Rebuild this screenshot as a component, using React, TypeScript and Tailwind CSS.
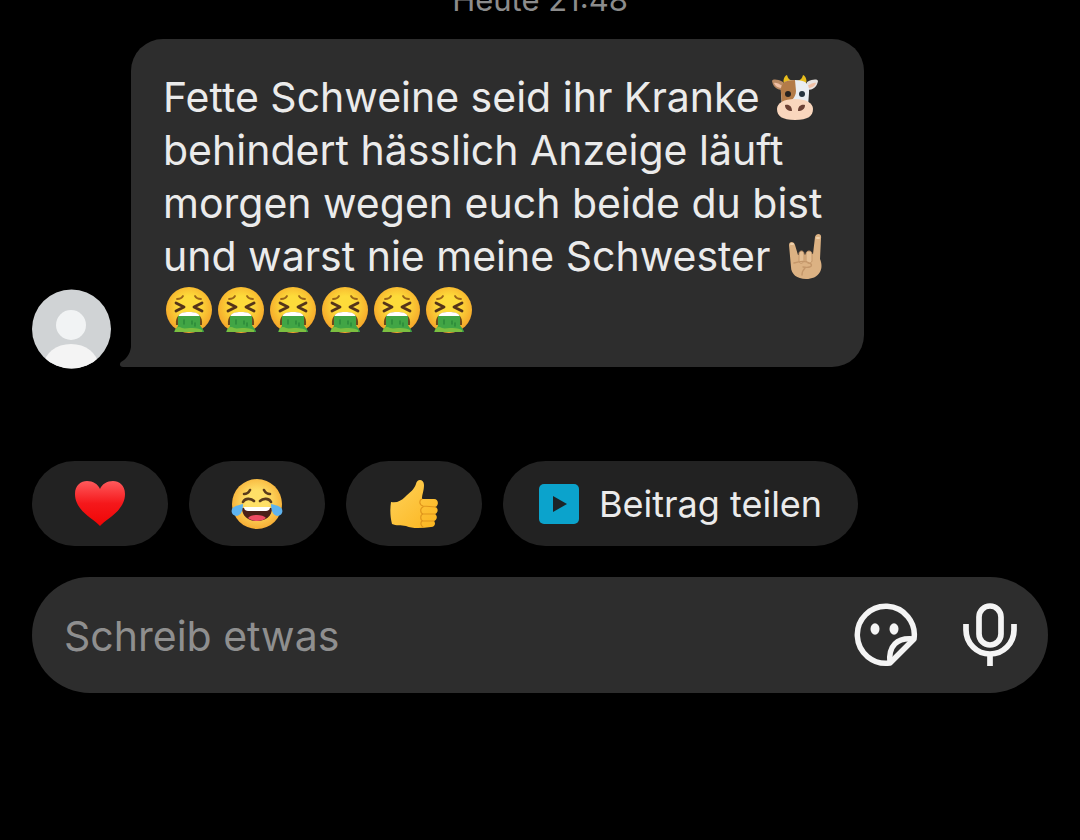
import React from "react";

type IconProps = { className?: string };

function Cow({ className }: IconProps) {
  return (
    <svg viewBox="0 0 48 48" className={className} role="img" aria-label="Kuh">
      <path d="M14 11C11 8 13 2 16 1c1 4 3 5 6 6v4zM34 11c3-3 1-9-2-10-1 4-3 5-6 6v4z" fill="#e8bd1c" />
      <path d="M12 8C6 5 2 5 1 7c1 6 5 9 11 9z" fill="#b98a63" />
      <path d="M12 12C7 9 4 8 3 9c1 3 4 5 9 5z" fill="#f0bfa4" />
      <path d="M36 8c6-3 10-3 11-1-1 6-5 9-11 9z" fill="#e8e3e0" />
      <path d="M36 12c5-3 8-4 9-3-1 3-4 5-9 5z" fill="#f0bfa4" />
      <path d="M24 6C14 6 9 9 10 19l1 13h26l1-13c1-10-4-13-14-13z" fill="#e9edf2" />
      <path d="M24 6C13 6 9 9 10 19l1 12c8-2 14-7 14-14z" fill="#b37b48" />
      <path d="M24 25c-11 0-18 4-18 10 0 7 5 11 18 11s18-4 18-11c0-6-7-10-18-10z" fill="#f9d6bd" />
      <circle cx="17" cy="20" r="3" fill="#25211f" />
      <circle cx="31" cy="20" r="3" fill="#25333f" />
      <path d="M14 31c4-1 7 1 7 6-4 0-7-2-7-6zM34 31c-4-1-7 1-7 6 4 0 7-2 7-6z" fill="#6b4034" />
    </svg>
  );
}

function Horns({ className }: IconProps) {
  return (
    <svg viewBox="0 0 48 48" className={className} role="img" aria-label="Rock-Geste">
      <path
        d="M7 12c0-4 5-4 6 0l3 10 15-1 2-17c1-4 7-4 6 1l-1 21c2 5 2 9 0 13-3 5-8 7-14 7-9 0-15-5-15-12z"
        fill="#dcb283"
      />
      <path d="M17 21c0-4 5-4 5 0v7c-1 3-5 3-5 0zM24 21c0-4 6-4 6 0v7c-1 3-5 3-6 0z" fill="#e5bf93" stroke="#c4976a" strokeWidth="1" />
      <path d="M12 30c6-2 12-3 17 1 2 3-3 4-8 3M23 35c-2 2-3 4-3 7" fill="none" stroke="#c4976a" strokeWidth="1.4" strokeLinecap="round" />
      <path d="M9 11h2M35 5h2" stroke="#f0d2ad" strokeWidth="2" strokeLinecap="round" />
    </svg>
  );
}

function Vomit({ className }: IconProps) {
  return (
    <svg viewBox="0 0 48 48" className={className} role="img" aria-label="Erbrechendes Gesicht">
      <defs>
        <radialGradient id="vomitFace" cx="50%" cy="42%" r="56%">
          <stop offset="0.4" stopColor="#fddb3a" />
          <stop offset="1" stopColor="#f5a62a" />
        </radialGradient>
      </defs>
      <circle cx="24" cy="24" r="23" fill="url(#vomitFace)" />
      <g fill="none" stroke="#54341a" strokeLinecap="round" strokeLinejoin="round">
        <path d="M12 13c3 0 5-1 6-3M36 13c-3 0-5-1-6-3" strokeWidth="1.8" stroke="#9a6419" />
        <path d="M11 17l8 4-8 4M37 17l-8 4 8 4" strokeWidth="2.8" />
      </g>
      <path d="M11 39c-1-9 4-13 13-13s14 4 13 13z" fill="#6b4a1c" />
      <path d="M13 31c1-4 5-5 11-5s10 1 11 5z" fill="#fff" />
      <path d="M13 30h22v9c1 2 4 5 4 7H9c0-2 4-4 4-7z" fill="#41a545" />
      <path d="M10 44c2-4 5-3 7-2 3 1 5 0 8 0s8 0 12 2v2H10z" fill="#7cbf40" />
      <path d="M19 34v4M27 35v3M30 37v3" stroke="#2c8a3a" strokeWidth="1.6" strokeLinecap="round" />
    </svg>
  );
}

function Heart({ className }: IconProps) {
  return (
    <svg viewBox="0 0 52 52" className={className} aria-hidden="true">
      <defs>
        <linearGradient id="heartFill" x1="0" y1="0" x2="0" y2="1">
          <stop offset="0" stopColor="#ff5a5c" />
          <stop offset="0.5" stopColor="#f5181b" />
          <stop offset="1" stopColor="#f00505" />
        </linearGradient>
      </defs>
      <path d="M26 48C20 41 1 33 1 16 1 7 7 3 13 3c6 0 11 3 13 8 2-5 7-8 13-8s12 4 12 13c0 17-19 25-25 32z" fill="url(#heartFill)" />
    </svg>
  );
}

function Joy({ className }: IconProps) {
  return (
    <svg viewBox="0 0 52 52" className={className} aria-hidden="true">
      <defs>
        <radialGradient id="joyFace" cx="50%" cy="45%" r="55%">
          <stop offset="0.4" stopColor="#ffe067" />
          <stop offset="1" stopColor="#f6ad35" />
        </radialGradient>
      </defs>
      <circle cx="26" cy="26" r="25" fill="url(#joyFace)" />
      <g fill="none" stroke="#5a3b1c" strokeLinecap="round">
        <path d="M13 16c3 0 5-2 6-4M39 16c-3 0-5-2-6-4" strokeWidth="2.6" />
        <path d="M12 24c2-4 8-4 11-1M40 24c-2-4-8-4-11-1" strokeWidth="2.6" />
      </g>
      <path d="M11 30h30c0 8-6 13-15 13s-15-5-15-13z" fill="#4b2019" />
      <path d="M13 29h26c0 3-2 4-4 4H17c-2 0-4-1-4-4z" fill="#fff" />
      <path d="M17 40c3-4 15-4 18 0-5 4-13 4-18 0z" fill="#ee4b63" />
      <path d="M12 26c0 7-2 11-6 12-6 0-7-7-3-9 3-2 6-2 9-3zM40 26c0 7 2 11 6 12 6 0 7-7 3-9-3-2-6-2-9-3z" fill="#5fb3ee" />
    </svg>
  );
}

function Thumb({ className }: IconProps) {
  return (
    <svg viewBox="0 0 52 52" className={className} aria-hidden="true">
      <defs>
        <linearGradient id="thumbFill" x1="0" y1="0" x2="1" y2="1">
          <stop offset="0" stopColor="#ffd25a" />
          <stop offset="1" stopColor="#fbb51e" />
        </linearGradient>
      </defs>
      <path
        d="M3 24c6 1 10-1 14-5 5-5 9-7 11-13 1-6 8-5 8 1 0 6-2 9-2 14h12c5 0 5 7 1 8 4 1 3 6 0 7 3 2 2 6-1 7 2 2 1 6-3 6-9 1-18 2-25-1-5-1-10 0-14-2-2-8-2-15-1-22z"
        fill="url(#thumbFill)"
      />
      <g fill="none" stroke="#e0961c" strokeWidth="1.2" strokeLinecap="round">
        <path d="M34 21c-3 1-3 6 1 7l13 1M35 29c-3 1-3 6 0 7h12M35 36c-3 1-3 6 0 7h11M34 43c-2 2-1 5 1 6" />
      </g>
    </svg>
  );
}

function Sticker({ className }: IconProps) {
  return (
    <svg viewBox="0 0 64 64" className={className} fill="none" stroke="#f4f4f4" strokeWidth="5.5" strokeLinejoin="round" aria-hidden="true">
      <path d="M36 60A28.500 28.500 0 1 1 60 36Z" />
      <path d="M36 60C34 43 43 34 60 36" />
      <ellipse cx="21" cy="26" rx="4.500" ry="5.700" fill="#f4f4f4" stroke="none" />
      <ellipse cx="40" cy="26" rx="4.500" ry="5.700" fill="#f4f4f4" stroke="none" />
    </svg>
  );
}

function Mic({ className }: IconProps) {
  return (
    <svg viewBox="0 0 56 64" className={className} fill="none" stroke="#f4f4f4" strokeWidth="5.7" aria-hidden="true">
      <rect x="17" y="3" width="22" height="39" rx="11" />
      <path d="M4 21v6a24 24 0 0 0 48 0v-6M28 51v12" />
    </svg>
  );
}

function Inline({ children }: { children: React.ReactNode }) {
  return <span className="inline-flex h-[53px] items-center align-top">{children}</span>;
}

const reactions = [
  { label: "Herz", Icon: Heart },
  { label: "Lachen", Icon: Joy },
  { label: "Daumen hoch", Icon: Thumb },
];

export default function App() {
  return (
    <main className="min-h-screen overflow-hidden bg-black px-8 font-['Inter',sans-serif] text-[#ebebeb]">
      <div className="-mt-5 h-[59px] text-center text-[31px] leading-[40px] text-[#8c8c8c]">
        <time>Heute 21:48</time>
      </div>

      <section className="flex items-end">
        <svg viewBox="0 0 80 80" className="-mb-0.5 size-20 shrink-0" role="img" aria-label="Profilbild">
          <defs>
            <clipPath id="avatarClip">
              <circle cx="39.500" cy="40" r="39.500" />
            </clipPath>
          </defs>
          <g clipPath="url(#avatarClip)">
            <rect width="80" height="80" fill="#d0d3d5" />
            <circle cx="39" cy="36" r="15" fill="#f1f3f4" />
            <ellipse cx="39" cy="76" rx="27" ry="21" fill="#f4f4f4" />
          </g>
        </svg>
        <svg viewBox="0 0 12 20" className="ml-[7px] h-5 w-3 shrink-0" fill="#2d2d2d" aria-hidden="true">
          <path d="M12 0C11 8 6 13 2 15c-2 2-1 5 2 5h8z" />
        </svg>
        <p className="w-[733px] rounded-[32px] rounded-bl-none bg-[#2d2d2d] pt-8 pr-6 pb-[31px] pl-8 text-[41px] leading-[53px]">
          Fette Schweine seid ihr Kranke{" "}
          <Inline><Cow className="size-12" /></Inline>
          <br />
          behindert hässlich Anzeige läuft
          <br />
          morgen wegen euch beide du bist
          <br />
          und warst nie meine Schwester{" "}
          <Inline><Horns className="size-12" /></Inline>
          <br />
          {[0, 1, 2, 3, 4, 5].map((n) => (
            <Inline key={n}><Vomit className="mx-0.5 size-12" /></Inline>
          ))}
        </p>
      </section>

      <div className="mt-[94px] flex gap-[21px]">
        {reactions.map(({ label, Icon }) => (
          <button key={label} type="button" aria-label={label} className="flex h-[85px] w-[136px] items-center justify-center rounded-full bg-[#222222]">
            <Icon className="size-[52px]" />
          </button>
        ))}
        <button type="button" className="flex h-[85px] items-center gap-5 rounded-full bg-[#222222] px-9 text-[36px] whitespace-nowrap">
          <svg viewBox="0 0 40 40" className="size-10" aria-hidden="true">
            <rect width="40" height="40" rx="5" fill="#0ba3cc" />
            <path d="M14 12l14 8-14 8z" fill="#1d2427" />
          </svg>
          Beitrag teilen
        </button>
      </div>

      <form className="mt-[31px] flex h-[116px] items-center rounded-full bg-[#2d2d2d] pr-[30px] pl-8" onSubmit={(e) => e.preventDefault()}>
        <input
          type="text"
          aria-label="Schreib etwas"
          placeholder="Schreib etwas"
          className="min-w-0 flex-1 bg-transparent pt-1 text-[41px] outline-none placeholder:text-[#8f8f8f]"
        />
        <button type="button" aria-label="Sticker" className="shrink-0">
          <Sticker className="size-16" />
        </button>
        <button type="button" aria-label="Sprachnachricht" className="ml-11 shrink-0">
          <Mic className="h-16 w-14" />
        </button>
      </form>
    </main>
  );
}
